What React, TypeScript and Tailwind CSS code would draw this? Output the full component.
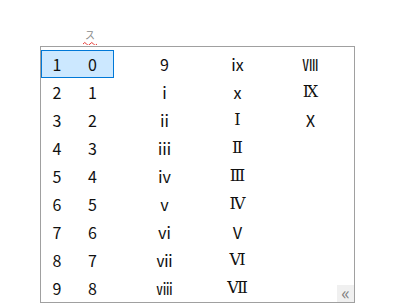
const font = { fontFamily: '"Noto Sans CJK JP", "Noto Sans", sans-serif' };
const serif = { fontFamily: '"DejaVu Serif", "Noto Sans CJK JP", serif' };

const first = ["0", "1", "2", "3", "4", "5", "6", "7", "8"];
const columns = [
  ["9", "ⅰ", "ⅱ", "ⅲ", "ⅳ", "ⅴ", "ⅵ", "ⅶ", "ⅷ"],
  ["ⅸ", "ⅹ", "Ⅰ", "Ⅱ", "Ⅲ", "Ⅳ", "Ⅴ", "Ⅵ", "Ⅶ"],
  ["Ⅷ", "Ⅸ", "Ⅹ"],
];

// numerals containing a barred I
const barred = ["Ⅰ", "Ⅱ", "Ⅲ", "Ⅳ", "Ⅵ", "Ⅶ", "Ⅸ"];

export default function App() {
  return (
    <div className="w-[393px] h-[308px] bg-white text-[#111]" style={font}>
      <div className="h-[46px] pl-[83px] pt-[29px]">
        <div className="w-[14px] flex flex-col items-center">
          <span className="text-[10px] leading-[11px] text-[#8a8a8a]">ス</span>
          <svg width="14" height="4" viewBox="0 0 14 4" className="mt-[1px]">
            <path
              d="M0 3 Q1.75 0 3.5 3 T7 3 T10.5 3 T14 3"
              fill="none"
              stroke="#e53935"
              strokeWidth="1"
            />
          </svg>
        </div>
      </div>
      <div className="ml-[40px] w-[315px] h-[257px] border border-[#a0a0a0] flex pt-[3px] relative">
        <div className="flex flex-col w-[73px]">
          {first.map((c, i) => (
            <div
              key={c}
              className={
                "h-[28px] flex items-center text-[16px] " +
                (i === 0 ? "bg-[#cce8ff] border border-[#0078d7]" : "border border-transparent")
              }
            >
              <span className="w-[30px] text-center">{i + 1}</span>
              <span className="w-[41px] text-center">{c}</span>
            </div>
          ))}
        </div>
        {columns.map((col, ci) => (
          <div key={ci} className="flex flex-col w-[73px]">
            {col.map((c) => (
              <div key={c} className="h-[28px] flex items-center text-[16px]">
                <span className="ml-[30px] w-[41px] text-center" style={barred.includes(c) ? serif : undefined}>
                  {c}
                </span>
              </div>
            ))}
          </div>
        ))}
        <div className="absolute right-0 bottom-0 w-[17px] h-[17px] bg-[#f0f0f0] flex items-center justify-center text-[18px] leading-none text-[#808080] pb-[3px]">
          «
        </div>
      </div>
    </div>
  );
}
